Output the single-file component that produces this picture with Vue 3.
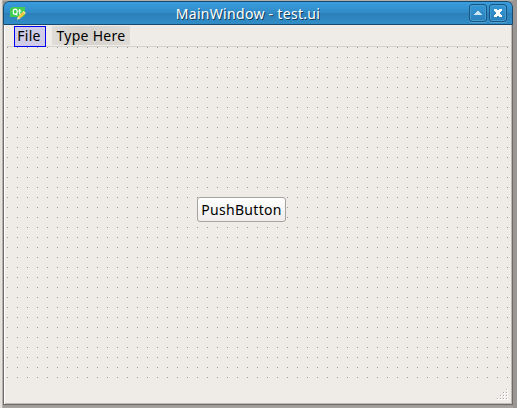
<script setup>
const title = 'MainWindow - test.ui'
const grip = [[9, 0], [6, 3], [9, 3], [3, 6], [6, 6], [9, 6], [0, 9], [3, 9], [6, 9], [9, 9]]
</script>

<template>
  <div class="desktop">
    <div class="window">
      <header class="titlebar">
        <svg class="logo" width="17" height="15" viewBox="0 0 17 15">
          <path d="M2 1H15V9L13 11H0V3Z" fill="#41cd52" />
          <ellipse cx="5.2" cy="5.8" rx="2" ry="2.7" fill="none" stroke="#fff" stroke-width="1.1" />
          <path d="M5.5 7.3L7.4 9.3M9.7 3V7.4Q9.7 8.7 11.2 8.3M8.2 5H11.4" fill="none" stroke="#fff" stroke-width="1.1" />
          <path d="M7 13.5L8 10.8L13.5 5L15.8 7L10 12.8Z" fill="#f4c842" />
          <path d="M7 13.5L8 10.8L10 12.8Z" fill="#f5e7c9" />
          <path d="M12.5 6L13.5 5L15.8 7L14.7 8.1Z" fill="#f4e4a4" />
        </svg>
        <span class="title"><span>{{ title }}</span></span>
        <div class="controls">
          <button class="control" aria-label="Maximize">
            <svg width="16" height="16" viewBox="0 0 16 16" shape-rendering="crispEdges">
              <path d="M7 6H9V7H10V8H11V9H12V10H4V9H5V8H6V7H7Z" fill="#cce5f5" />
            </svg>
          </button>
          <button class="control" aria-label="Close">
            <svg width="16" height="16" viewBox="0 0 16 16" shape-rendering="crispEdges">
              <path d="M4 4H7V5H9V4H12V6H11V7H10V9H11V10H12V12H9V11H7V12H4V10H5V9H6V7H5V6H4Z" fill="#fff" />
            </svg>
          </button>
        </div>
      </header>
      <main class="body">
        <nav class="menubar">
          <span class="menu selected"><span>File</span></span>
          <span class="menu placeholder"><span>Type Here</span></span>
        </nav>
        <section class="canvas">
          <button class="push"><span>PushButton</span></button>
        </section>
        <footer class="status">
          <svg width="11" height="11" viewBox="0 0 11 11" shape-rendering="crispEdges">
            <g v-for="([x, y], i) in grip" :key="i">
              <rect :x="x" :y="y" width="2" height="2" fill="#fff" />
              <rect :x="x" :y="y" width="1" height="1" fill="#aaa6a2" />
            </g>
          </svg>
        </footer>
      </main>
    </div>
  </div>
</template>

<style>
body { margin: 0; overflow: hidden; }
</style>

<style scoped>
* { box-sizing: border-box; }
.desktop {
  width: 517px;
  height: 408px;
  padding: 1px 4px 3px 3px;
  background: linear-gradient(90deg, #e5e2de 2px, #b5b2ae 2px 3px, transparent 3px),
    linear-gradient(90deg, transparent 513px, #999693 513px),
    linear-gradient(#b1aeaa 0 1px, #94918e 1px 405px, #9a9895 405px, #aaa7a3);
  font-family: "Noto Sans", "Open Sans", sans-serif;
  font-size: 14px;
  letter-spacing: .3px;
  color: #000;
}
.window {
  width: 510px;
  height: 404px;
  display: flex;
  flex-direction: column;
  border-radius: 6px 6px 0 0;
  overflow: hidden;
}
.titlebar {
  height: 24px;
  flex: none;
  display: flex;
  align-items: center;
  padding: 0 5px 0 6px;
  border: 1px solid #17496c;
  border-radius: 6px 6px 0 0;
  background: linear-gradient(#399dde, #318bc7 48%, #2d80b9 52%, #318dc7);
}
.logo { flex: none; margin-top: 1px; }
.title {
  flex: 1;
  display: flex;
  justify-content: center;
  color: #fff;
  line-height: 20px;
  padding-top: 2px;
  text-shadow: 1px 1px 0 #123c58;
  white-space: nowrap;
}
.controls { display: flex; gap: 2px; }
.control {
  width: 18px;
  height: 18px;
  padding: 0;
  border: 1px solid #185582;
  border-radius: 3px;
  background: linear-gradient(#3698d7, #2b80b9);
  box-shadow: inset 0 0 0 1px #459dd2, 0 1px 0 #51a1d1;
}
.control svg { display: block; }
.body {
  flex: 1;
  display: flex;
  flex-direction: column;
  border: solid #6d6c6a;
  border-width: 0 1px 1px;
  background: #efebe7;
  box-shadow: inset 1px 0 0 #fff, inset -1px -1px 0 #bfbcb8;
}
.menubar {
  height: 22px;
  flex: none;
  margin: 0 3px;
  padding: 1px 0 0 7px;
  display: flex;
  gap: 6px;
  border-bottom: 1px solid #d4d1cd;
}
.menu {
  display: flex;
  justify-content: center;
  height: 21px;
  line-height: 20px;
  white-space: nowrap;
}
.selected {
  width: 32px;
  padding-right: 2px;
  border: 1px solid #0000f0;
  background: #d0cce7;
  line-height: 18px;
}
.placeholder {
  width: 78px;
  height: 19px;
  background: linear-gradient(90deg, #e0ddd9, #d4d1cd 35%, #dfdcd8);
}
.canvas {
  height: 334px;
  flex: none;
  margin: 0 4px 0 3px;
  padding: 150px 0 0 190px;
  background: radial-gradient(circle at .5px .5px, #9b9894 0 .8px, transparent .8px) 0 0 / 10px 10px;
}
.push {
  width: 89px;
  height: 25px;
  display: flex;
  justify-content: center;
  padding: 0;
  border: 1px solid #a6a3a0;
  border-radius: 3px;
  background: linear-gradient(#fff, #efedeb);
  font: inherit;
  letter-spacing: inherit;
  color: inherit;
  line-height: 24px;
  white-space: nowrap;
}
.status {
  flex: 1;
  display: flex;
  justify-content: flex-end;
  padding: 8px 4px 0 0;
}
</style>
